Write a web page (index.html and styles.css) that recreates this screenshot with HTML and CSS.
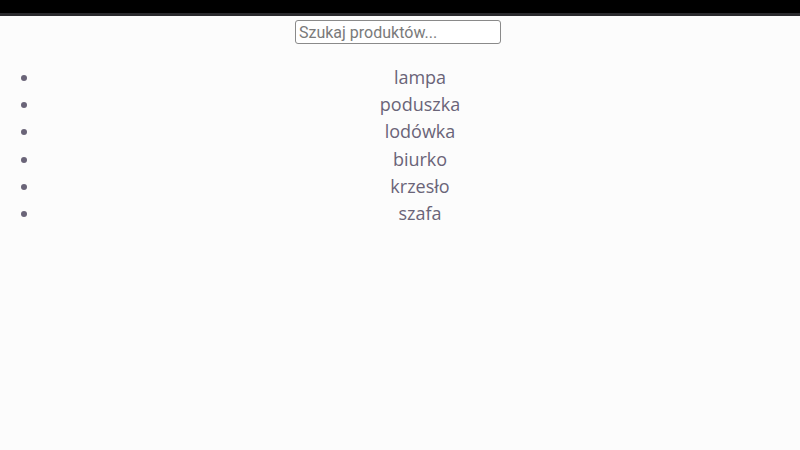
FILE: index.html
```html
<!DOCTYPE html>
<html lang="pl">
<head>
<meta charset="utf-8">
<title>Produkty</title>
<link rel="stylesheet" href="styles.css">
</head>
<body>
<div class="topbar"></div>
<div class="search">
  <input class="search-input" type="text" placeholder="Szukaj produktów...">
</div>
<ul class="products">
  <li>lampa</li>
  <li>poduszka</li>
  <li>lodówka</li>
  <li>biurko</li>
  <li>krzesło</li>
  <li>szafa</li>
</ul>
</body>
</html>
```
FILE: styles.css
```css
html, body {
  margin: 0;
  padding: 0;
  background: #fcfcfc;
}
body {
  font-family: "Open Sans", "Noto Sans", sans-serif;
}
.topbar {
  height: 13px;
  background: #000;
  border-bottom: 3px solid #2a2a2e;
}
.search {
  display: flex;
  justify-content: center;
  padding-top: 4px;
  padding-right: 4px;
}
.search-input {
  box-sizing: border-box;
  width: 206px;
  height: 24px;
  border: 1px solid #8a8a8a;
  border-radius: 3px;
  padding: 0 3px;
  font-family: Roboto, "Noto Sans", sans-serif;
  font-size: 16px;
  color: #333;
  background: #fff;
}
.search-input::placeholder {
  color: #7a7a7a;
}
.products {
  margin: 20px 0 0 0;
  padding-left: 40px;
  color: #6a6478;
  font-size: 18px;
  line-height: 27.2px;
  text-align: center;
}
```
